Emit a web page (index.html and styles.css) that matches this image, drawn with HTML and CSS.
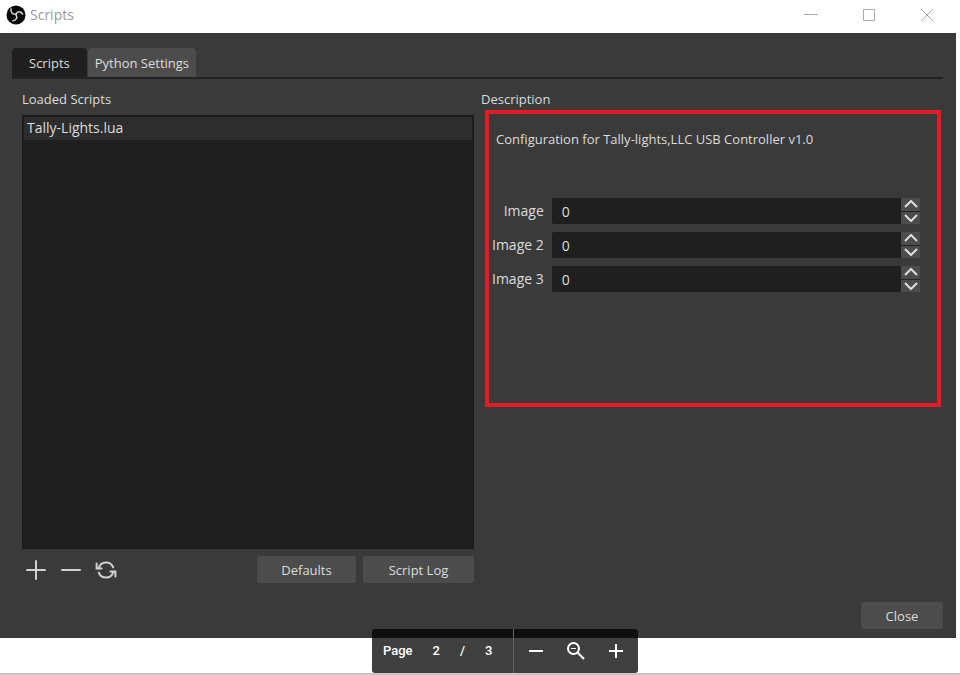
FILE: index.html
```html
<!DOCTYPE html>
<html lang="en">
<head>
  <meta charset="UTF-8">
  <meta name="viewport" content="width=device-width, initial-scale=1.0">
  <title>Scripts</title>
  <link rel="stylesheet" href="styles.css">
</head>
<body>
  <div class="window">
    <header class="titlebar">
      <svg class="logo" viewBox="0 0 20 20" width="20" height="20">
        <circle cx="10" cy="10" r="9.5" fill="#080808"/>
        <g fill="none" stroke="#d4d4d4" stroke-width="1.5" stroke-linecap="round">
          <path d="M5 4C4.4 7.2 6.4 9.4 9.8 9.3"/>
          <path d="M16.6 9C14.8 6.2 11.4 6 9.8 9.3"/>
          <path d="M7 15.8C10.6 15.4 11.8 12.4 9.8 9.3"/>
        </g>
      </svg>
      <span class="title">Scripts</span>
      <div class="window-controls">
        <button class="window-btn" aria-label="Minimize">
          <svg viewBox="0 0 14 14" width="14" height="14"><path d="M0 6.5H14"/></svg>
        </button>
        <button class="window-btn" aria-label="Maximize">
          <svg viewBox="0 0 14 14" width="14" height="14"><path d="M1.5 1.5H12.5V12.5H1.5Z"/></svg>
        </button>
        <button class="window-btn" aria-label="Close window">
          <svg viewBox="0 0 14 14" width="14" height="14"><path d="M1 1L13 13M13 1L1 13"/></svg>
        </button>
      </div>
    </header>

    <main class="dialog">
      <div class="tabs" role="tablist">
        <button class="tab active" role="tab" aria-selected="true">Scripts</button>
        <button class="tab" role="tab" aria-selected="false">Python Settings</button>
      </div>

      <div class="tab-page">
        <section class="column">
          <h2 class="heading">Loaded Scripts</h2>
          <ul class="script-list">
            <li class="script-item">Tally-Lights.lua</li>
          </ul>
          <div class="actions">
            <button class="icon-btn" aria-label="Add script">
              <svg viewBox="0 0 22 22" width="22" height="22"><path d="M11 2V20M2 11H20"/></svg>
            </button>
            <button class="icon-btn" aria-label="Remove script">
              <svg viewBox="0 0 22 22" width="22" height="22"><path d="M2 11H20"/></svg>
            </button>
            <button class="icon-btn" aria-label="Reload scripts">
              <svg class="reload" viewBox="0 0 22 22" width="22" height="22">
                <path d="M18.2 8.4A7.6 7.6 0 0 0 3.8 8.8M1.6 4.6V9.4H6.6M3.8 13.6A7.6 7.6 0 0 0 18.2 13.2M20.4 17.4V12.6H15.4"/>
              </svg>
            </button>
            <button class="btn defaults-btn">Defaults</button>
            <button class="btn log-btn">Script Log</button>
          </div>
        </section>

        <section class="column">
          <h2 class="heading">Description</h2>
          <div class="description">
            <p class="description-text">Configuration for Tally-lights,LLC USB Controller v1.0</p>
            <form class="fields">
              <label for="image1">Image</label>
              <div class="spinbox">
                <input type="text" inputmode="numeric" id="image1" value="0">
                <div class="steps">
                  <button type="button" class="step" aria-label="Increase Image"><svg viewBox="0 0 14 8" width="14" height="8"><path d="M1 7L7 1L13 7"/></svg></button>
                  <button type="button" class="step" aria-label="Decrease Image"><svg viewBox="0 0 14 8" width="14" height="8"><path d="M1 1L7 7L13 1"/></svg></button>
                </div>
              </div>
              <label for="image2">Image 2</label>
              <div class="spinbox">
                <input type="text" inputmode="numeric" id="image2" value="0">
                <div class="steps">
                  <button type="button" class="step" aria-label="Increase Image 2"><svg viewBox="0 0 14 8" width="14" height="8"><path d="M1 7L7 1L13 7"/></svg></button>
                  <button type="button" class="step" aria-label="Decrease Image 2"><svg viewBox="0 0 14 8" width="14" height="8"><path d="M1 1L7 7L13 1"/></svg></button>
                </div>
              </div>
              <label for="image3">Image 3</label>
              <div class="spinbox">
                <input type="text" inputmode="numeric" id="image3" value="0">
                <div class="steps">
                  <button type="button" class="step" aria-label="Increase Image 3"><svg viewBox="0 0 14 8" width="14" height="8"><path d="M1 7L7 1L13 7"/></svg></button>
                  <button type="button" class="step" aria-label="Decrease Image 3"><svg viewBox="0 0 14 8" width="14" height="8"><path d="M1 1L7 7L13 1"/></svg></button>
                </div>
              </div>
            </form>
          </div>
        </section>
      </div>

      <div class="footer">
        <button class="btn close-btn">Close</button>
      </div>
    </main>
  </div>

  <!-- Page controls float over the bottom of the window -->
  <div class="pager">
    <div class="pager-pages">
      <span class="pager-label">Page</span>
      <span>2</span>
      <span>/</span>
      <span>3</span>
    </div>
    <div class="pager-zoom">
      <button class="zoom-btn" aria-label="Zoom out">
        <svg viewBox="0 0 20 20" width="20" height="20"><path d="M3 10H17"/></svg>
      </button>
      <button class="zoom-btn" aria-label="Reset zoom">
        <svg viewBox="0 0 20 20" width="20" height="20"><circle cx="7.5" cy="7.5" r="5.5"/><path d="M11.5 11.5L18 18"/><path class="thin" d="M5 7.5H10"/></svg>
      </button>
      <button class="zoom-btn" aria-label="Zoom in">
        <svg viewBox="0 0 20 20" width="20" height="20"><path d="M3 10H17M10 3V17"/></svg>
      </button>
    </div>
  </div>
</body>
</html>
```

FILE: styles.css
```css
* {
  box-sizing: border-box;
}

body {
  display: flex;
  flex-direction: column;
  min-height: 100vh;
  margin: 0;
  padding: 0 4px 35px 0;
  border-bottom: 2px solid #c6c6c6;
  background: #fff;
  color: #dcdcdc;
  font-family: "Open Sans", "Noto Sans", sans-serif;
  font-size: 13px;
  line-height: 20px;
}

button,
input {
  font: inherit;
  color: inherit;
  border: none;
  padding: 0;
  margin: 0;
}

button {
  background: none;
  cursor: pointer;
}

svg {
  display: block;
  fill: none;
}

.window {
  flex: 1;
  display: flex;
  flex-direction: column;
}

.titlebar {
  display: flex;
  align-items: center;
  height: 33px;
  padding: 0 0 4px 6px;
  background: #fff;
}

.title {
  margin-left: 4px;
  color: #999;
  font-size: 14px;
}

.window-controls {
  display: flex;
  margin-left: auto;
}

.window-btn {
  display: flex;
  justify-content: center;
  align-items: center;
  width: 58px;
  height: 29px;
}

.window-btn svg {
  stroke: #aaa;
  stroke-width: 1;
}

.dialog {
  flex: 1;
  display: flex;
  flex-direction: column;
  padding: 15px 13px 9px 12px;
  background: #3a3a3a;
}

.tabs {
  display: flex;
  gap: 1px;
  border-bottom: 2px solid #232323;
}

.tab {
  height: 29px;
  padding: 0 7px;
  border-radius: 4px 4px 0 0;
  background: #4c4c4c;
}

.tab.active {
  padding: 0 17px;
  background: #1f1f1f;
}

.tab-page {
  flex: 1;
  display: grid;
  grid-template-columns: 452fr 460fr;
  gap: 7px;
  padding: 10px 2px 0 10px;
}

.column {
  display: flex;
  flex-direction: column;
}

.heading {
  margin: 0 0 6px;
  font-size: 13px;
  font-weight: normal;
}

.script-list {
  flex: 1;
  margin: 0 0 7px;
  padding: 1px;
  border: 1px solid #1a1a1a;
  background: #1f1f1f;
  list-style: none;
}

.script-item {
  padding: 1px 3px 2px;
  background: #2d2d2d;
  font-size: 14px;
}

.actions {
  display: flex;
  align-items: center;
  gap: 7px;
  padding-left: 3px;
}

.icon-btn {
  width: 28px;
}

.icon-btn svg {
  stroke: #d2d2d2;
  stroke-width: 2;
  stroke-linecap: round;
}

.btn {
  height: 27px;
  border-radius: 3px;
  background: #4c4c4c;
}

.defaults-btn {
  width: 99px;
  margin-left: auto;
}

.log-btn {
  width: 111px;
}

.description {
  min-height: 297px;
  margin: -5px 0 0 4px;
  padding: 15px 17px 15px 3px;
  border: 4px solid #e51c27;
}

.description-text {
  margin: 0 0 49px;
  padding-left: 4px;
}

.fields {
  display: grid;
  grid-template-columns: auto 1fr;
  align-items: center;
  gap: 8px;
  font-size: 14px;
}

.fields label {
  text-align: right;
}

.spinbox {
  display: flex;
}

.spinbox input {
  flex: 1;
  min-width: 0;
  height: 26px;
  padding: 0 10px;
  border-radius: 2px 0 0 2px;
  background: #1f1f1f;
}

.steps {
  display: grid;
  grid-template-rows: 1fr 1fr;
  gap: 1px;
  width: 19px;
  background: #222;
}

.step {
  display: flex;
  justify-content: center;
  align-items: center;
  background: #4c4c4c;
}

.step svg {
  stroke: #dedede;
  stroke-width: 2;
}

.footer {
  display: flex;
  justify-content: flex-end;
  padding-top: 19px;
}

.close-btn {
  width: 82px;
}

.pager {
  position: absolute;
  bottom: 2px;
  left: 372px;
  display: flex;
  height: 44px;
  border-radius: 3px;
  background: rgba(0, 0, 0, 0.75);
  color: #fff;
  font-family: Roboto, sans-serif;
  font-weight: 500;
}

.pager-pages {
  display: flex;
  align-items: center;
  gap: 20px;
  padding: 0 21px 0 11px;
  border-right: 1px solid #666;
}

.pager-zoom {
  display: flex;
  align-items: center;
  gap: 20px;
  padding: 0 12px;
}

.zoom-btn svg {
  stroke: #fff;
  stroke-width: 2;
}

.zoom-btn .thin {
  stroke-width: 1;
}
```
